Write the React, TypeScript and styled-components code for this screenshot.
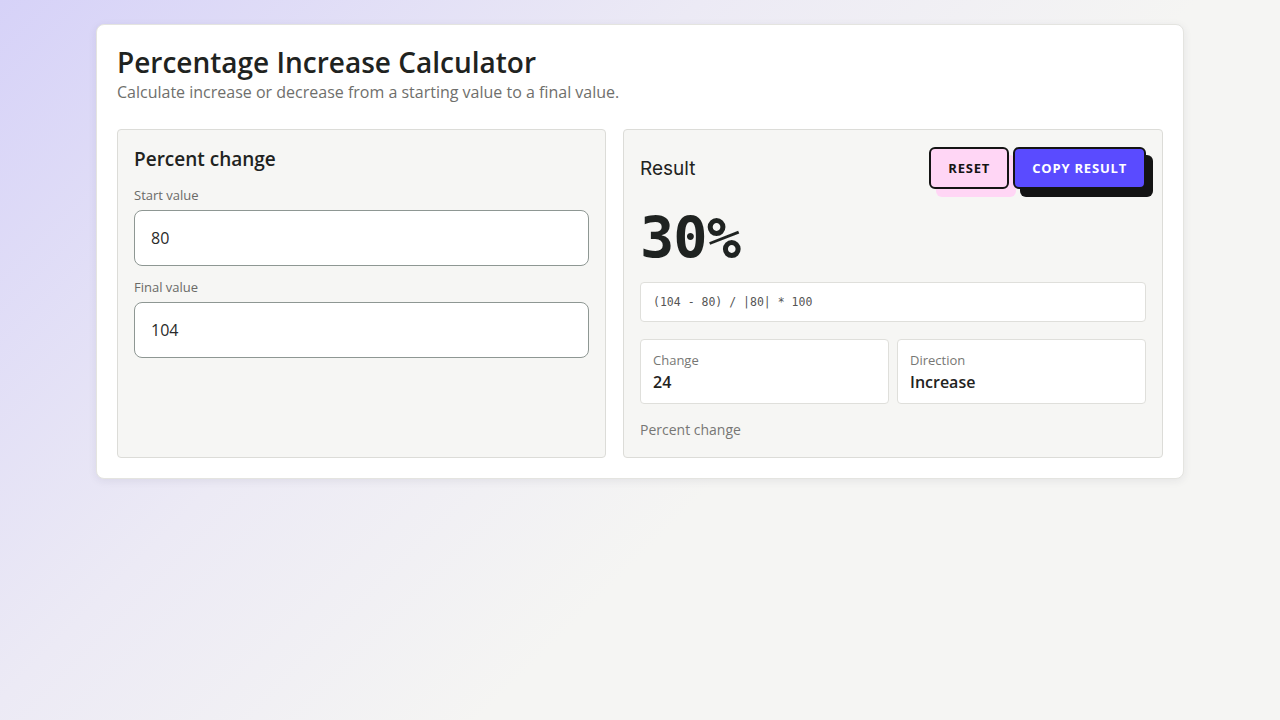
import styled, { createGlobalStyle } from "styled-components";

const GlobalStyle = createGlobalStyle`
    html, body {
        margin: 0;
        padding: 0;
        min-height: 100%;
    }
    body {
        font-family: "Open Sans", "Noto Sans", sans-serif;
        color: #1f2321;
        background: linear-gradient(135deg, #d6d2f8 0%, #eceaf5 35%, #f5f5f3 60%, #f5f5f3 100%);
        min-height: 720px;
    }
`;

const Page = styled.div`
    padding: 24px 96px;
    min-height: 670px;
`;

const Card = styled.div`
    background-color: #ffffff;
    border: 1px solid #e4e4e0;
    border-radius: 8px;
    box-shadow: 0 2px 8px rgba(40, 40, 60, 0.08);
    padding: 20px;
`;

const Title = styled.h1`
    margin: 0;
    font-size: 28px;
    font-weight: 600;
    line-height: 34px;
    color: #1f2321;
`;

const Subtitle = styled.p`
    margin: 2px 0 0;
    font-size: 16px;
    line-height: 22px;
    color: #6f6f6c;
`;

const Grid = styled.div`
    display: grid;
    grid-template-columns: 489fr 540fr;
    gap: 17px;
    margin-top: 26px;
`;

const Panel = styled.section`
    background-color: #f6f6f4;
    border: 1px solid #dcdcd8;
    border-radius: 4px;
    padding: 16px 16px 18px;
    min-height: 292px;
`;

const PanelTitle = styled.h2`
    margin: 0 0 15px;
    font-size: 19px;
    font-weight: 600;
    line-height: 26px;
`;

const Field = styled.label`
    display: flex;
    flex-direction: column;
    gap: 7px;
    margin-bottom: 13px;
`;

const FieldLabel = styled.span`
    font-size: 13px;
    color: #6a6a67;
    line-height: 16px;
`;

const Input = styled.input`
    height: 56px;
    box-sizing: border-box;
    border: 1px solid #8e9793;
    border-radius: 8px;
    background: #ffffff;
    padding: 0 16px;
    font-family: "Open Sans", "Noto Sans", sans-serif;
    font-size: 16px;
    color: #2a2a2a;
    outline: none;
`;

const ResultHead = styled.div`
    display: flex;
    align-items: center;
    justify-content: space-between;
    padding-top: 1px;
`;

const ResultTitle = styled.h2`
    margin: 0;
    font-family: Inter, "Liberation Sans", sans-serif;
    font-size: 19px;
    font-weight: 400;
    color: #1f2321;
`;

const Actions = styled.div`
    display: flex;
    gap: 4px;
`;

const ActionButton = styled.button<{ $primary?: boolean }>`
    height: 42px;
    padding: 0 17px;
    border: 2px solid #141414;
    border-radius: 6px;
    background-color: ${(p) => (p.$primary ? "#5a4bff" : "#ffd6f5")};
    color: ${(p) => (p.$primary ? "#ffffff" : "#141414")};
    box-shadow: 7px 8px 0 ${(p) => (p.$primary ? "#141414" : "#ffd6f5")};
    font-family: "Open Sans", "Noto Sans", sans-serif;
    font-size: 13px;
    font-weight: 700;
    letter-spacing: 0.8px;
    text-transform: uppercase;
    cursor: pointer;
`;

const BigValue = styled.div`
    font-family: "DejaVu Sans Mono", "Liberation Mono", monospace;
    font-size: 57px;
    font-weight: 700;
    line-height: 62px;
    margin: 18px 0 13px;
    color: #1f2321;
    letter-spacing: -1px;
`;

const Formula = styled.div`
    background: #ffffff;
    border: 1px solid #dfdfdb;
    border-radius: 4px;
    padding: 12px;
    font-family: "DejaVu Sans Mono", "Liberation Mono", monospace;
    font-size: 11.5px;
    line-height: 14px;
    color: #555555;
`;

const Stats = styled.div`
    display: grid;
    grid-template-columns: 1fr 1fr;
    gap: 8px;
    margin-top: 17px;
`;

const Stat = styled.div`
    background: #ffffff;
    border: 1px solid #dfdfdb;
    border-radius: 4px;
    padding: 12px 12px 11px;
    display: flex;
    flex-direction: column;
    gap: 3px;
`;

const StatLabel = styled.span`
    font-size: 13px;
    color: #777774;
    line-height: 17px;
`;

const StatValue = styled.span`
    font-size: 16px;
    font-weight: 600;
    color: #1f2321;
    line-height: 20px;
`;

const Note = styled.p`
    margin: 17px 0 0;
    font-size: 14px;
    line-height: 18px;
    color: #777774;
`;

export default function App() {
    const start = 80;
    const final = 104;
    const change = final - start;
    const pct = Math.round((change / Math.abs(start)) * 100);

    return (
        <>
            <GlobalStyle />
            <Page>
                <Card>
                    <Title>Percentage Increase Calculator</Title>
                    <Subtitle>Calculate increase or decrease from a starting value to a final value.</Subtitle>
                    <Grid>
                        <Panel>
                            <PanelTitle>Percent change</PanelTitle>
                            <Field>
                                <FieldLabel>Start value</FieldLabel>
                                <Input defaultValue={start} />
                            </Field>
                            <Field>
                                <FieldLabel>Final value</FieldLabel>
                                <Input defaultValue={final} />
                            </Field>
                        </Panel>
                        <Panel>
                            <ResultHead>
                                <ResultTitle>Result</ResultTitle>
                                <Actions>
                                    <ActionButton>Reset</ActionButton>
                                    <ActionButton $primary>Copy result</ActionButton>
                                </Actions>
                            </ResultHead>
                            <BigValue>{pct}%</BigValue>
                            <Formula>
                                ({final} - {start}) / |{start}| * 100
                            </Formula>
                            <Stats>
                                <Stat>
                                    <StatLabel>Change</StatLabel>
                                    <StatValue>{change}</StatValue>
                                </Stat>
                                <Stat>
                                    <StatLabel>Direction</StatLabel>
                                    <StatValue>Increase</StatValue>
                                </Stat>
                            </Stats>
                            <Note>Percent change</Note>
                        </Panel>
                    </Grid>
                </Card>
            </Page>
        </>
    );
}
